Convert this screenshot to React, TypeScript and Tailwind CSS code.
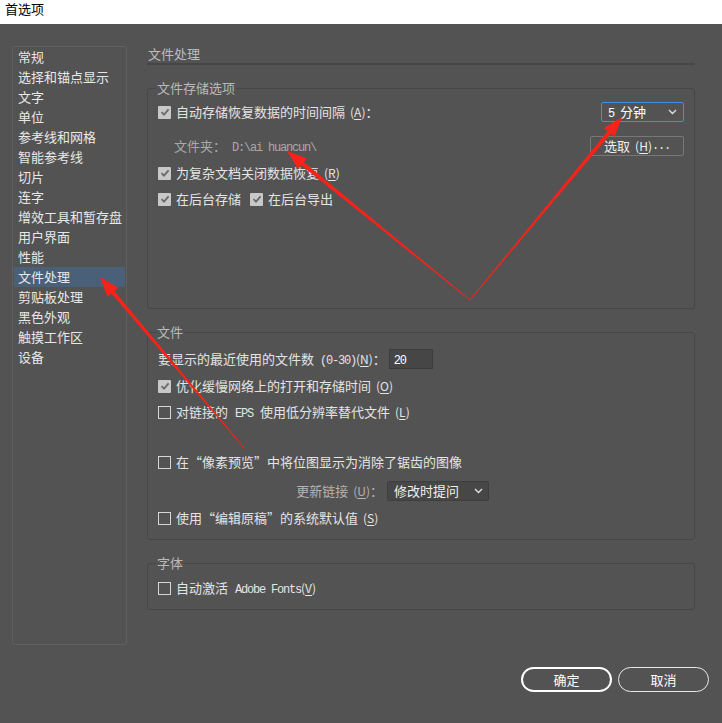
import type { FC, ReactNode } from "react";

const navItems = [
  "常规",
  "选择和锚点显示",
  "文字",
  "单位",
  "参考线和网格",
  "智能参考线",
  "切片",
  "连字",
  "增效工具和暂存盘",
  "用户界面",
  "性能",
  "文件处理",
  "剪贴板处理",
  "黑色外观",
  "触摸工作区",
  "设备",
];

// half-width latin runs, like the SimSun look in the dialog
const L: FC<{ children: ReactNode; className?: string }> = ({ children, className = "" }) => (
  <span className={`font-['Liberation_Mono'] text-[12px] tracking-[-1.2px] ${className}`}>{children}</span>
);

const Key: FC<{ k: string }> = ({ k }) => (
  <span className="ml-[5px] text-[12px]">
    (<u className="underline-offset-2">{k}</u>)
  </span>
);

const Checkbox: FC<{ checked?: boolean; label: ReactNode }> = ({ checked, label }) => (
  <label className="flex items-center gap-[5px] h-[20px] text-[#e4e4e4]">
    {checked ? (
      <span className="w-[13px] h-[13px] rounded-[1px] bg-[#c8c8c8] flex items-center justify-center">
        <svg width="10" height="10" viewBox="0 0 10 10">
          <path d="M1.5 5.2 L4 7.6 L8.6 2.4" stroke="#6a6a6a" strokeWidth="1.8" fill="none" />
        </svg>
      </span>
    ) : (
      <span className="w-[13px] h-[13px] border border-[#d6d6d6]" />
    )}
    <span>{label}</span>
  </label>
);

const Chevron = () => (
  <svg width="9" height="6" viewBox="0 0 9 6">
    <path d="M1 1 L4.5 4.5 L8 1" stroke="#e0e0e0" strokeWidth="1.4" fill="none" />
  </svg>
);

const Group: FC<{ title: string; className: string; children: ReactNode }> = ({
  title,
  className,
  children,
}) => (
  <fieldset className={`border border-[#474747] rounded-[3px] pl-[10px] pr-[10px] ${className}`}>
    <legend className="-ml-[2px] px-px leading-[18px] text-[#b9b9b9]">{title}</legend>
    {children}
  </fieldset>
);

const arrow = (tx: number, ty: number, px: number, py: number) => {
  const dx = px - tx;
  const dy = py - ty;
  const len = Math.hypot(dx, dy);
  const ux = dx / len;
  const uy = dy / len;
  const nx = -uy;
  const ny = ux;
  const head = 20;
  const bx = px - ux * head;
  const by = py - uy * head;
  const pts: [number, number][] = [
    [tx + nx * 0.4, ty + ny * 0.4],
    [bx + nx * 2, by + ny * 2],
    [bx + nx * 7, by + ny * 7],
    [px, py],
    [bx - nx * 7, by - ny * 7],
    [bx - nx * 2, by - ny * 2],
    [tx - nx * 0.4, ty - ny * 0.4],
  ];
  return pts.map((p) => p.map((v) => v.toFixed(1)).join(",")).join(" ");
};

const App: FC = () => {
  return (
    <div className="relative w-[722px] h-[723px] bg-[#535353] text-[13px] font-['Noto_Sans_CJK_SC',sans-serif] overflow-hidden">
      <div className="h-[24px] bg-white pl-[5px] text-black leading-[17px]">首选项</div>

      <div className="flex pt-[22px] pl-[12px] gap-[20px]">
        <nav className="w-[115px] h-[599px] border border-[#606060] rounded-[2px]">
          {navItems.map((item) => (
            <div
              key={item}
              className={`h-[20px] leading-[20px] mx-px pl-[4px] text-[#e8e8e8] ${
                item === "文件处理" ? "bg-[#4a6078]" : ""
              }`}
            >
              {item}
            </div>
          ))}
        </nav>

        <div className="w-[548px] -mt-[1px]">
          <div className="h-[20px] leading-[18px] pl-px text-[#bdbdbd] border-b-2 border-[#464646]">文件处理</div>

          <Group title="文件存储选项" className="mt-[14px] h-[230px]">
            <div className="flex items-center justify-between h-[20px] mt-[5px]">
              <Checkbox
                checked
                label={
                  <>
                    自动存储恢复数据的时间间隔<Key k="A" />：
                  </>
                }
              />
              <div className="w-[83px] h-[20px] border border-[#3f8fe6] rounded-[2px] flex items-center justify-between pl-[6px] pr-[6px] text-white">
                <span>
                  <L className="mr-[6px]">5</L>分钟
                </span>
                <Chevron />
              </div>
            </div>
            <div className="flex items-center justify-between h-[20px] mt-[14px]">
              <span className="pl-[16px] text-[#a9a9a9]">
                文件夹：<L className="ml-[6px]">D:\ai huancun\</L>
              </span>
              <div className="w-[94px] h-[20px] border border-[#777777] rounded-[2px] flex items-center justify-center text-[#eeeeee]">
                选取<Key k="H" />
                <L>...</L>
              </div>
            </div>
            <div className="mt-[7px]">
              <Checkbox
                checked
                label={
                  <>
                    为复杂文档关闭数据恢复<Key k="R" />
                  </>
                }
              />
            </div>
            <div className="mt-[6px] flex gap-[9px]">
              <Checkbox checked label="在后台存储" />
              <Checkbox checked label="在后台导出" />
            </div>
          </Group>

          <Group title="文件" className="mt-[14px] h-[217px]">
            <div className="flex items-center h-[20px] mt-[8px] text-[#e4e4e4]">
              <span>
                要显示的最近使用的文件数<L className="ml-[6px]">(0-30)</L>
                <span className="text-[12px]">
                  (<u className="underline-offset-2">N</u>)
                </span>
                ：
              </span>
              <div className="ml-[3px] w-[44px] h-[20px] bg-[#464646] border border-[#3c3c3c] pl-[4px] leading-[18px] text-white">
                <L>20</L>
              </div>
            </div>
            <div className="mt-[7px]">
              <Checkbox
                checked
                label={
                  <>
                    优化缓慢网络上的打开和存储时间<Key k="O" />
                  </>
                }
              />
            </div>
            <div className="mt-[6px]">
              <Checkbox
                label={
                  <>
                    对链接的<L className="mx-[7px]">EPS</L>使用低分辨率替代文件<Key k="L" />
                  </>
                }
              />
            </div>
            <div className="mt-[30px]">
              <Checkbox label="在“像素预览”中将位图显示为消除了锯齿的图像" />
            </div>
            <div className="flex items-center h-[20px] mt-[9px]">
              <span className="w-[225px] text-right text-[#b4b4b4]">
                更新链接<Key k="U" />：
              </span>
              <div className="ml-[4px] w-[102px] h-[20px] bg-[#474747] border border-[#3e3e3e] rounded-[2px] flex items-center justify-between pl-[6px] pr-[5px] text-[#f0f0f0]">
                <span>修改时提问</span>
                <Chevron />
              </div>
            </div>
            <div className="mt-[7px]">
              <Checkbox
                label={
                  <>
                    使用“编辑原稿”的系统默认值<Key k="S" />
                  </>
                }
              />
            </div>
          </Group>

          <Group title="字体" className="mt-[14px] h-[56px]">
            <div className="mt-[6px]">
              <Checkbox
                label={
                  <>
                    自动激活<L className="ml-[7px]">Adobe Fonts</L>
                    <span className="text-[12px]">
                      (<u className="underline-offset-2">V</u>)
                    </span>
                  </>
                }
              />
            </div>
          </Group>
        </div>
      </div>

      <div className="flex justify-end gap-[6px] pr-[13px] mt-[22px]">
        <button className="w-[91px] h-[25px] rounded-full border-2 border-white text-white">确定</button>
        <button className="w-[91px] h-[25px] rounded-full border-[1.5px] border-[#e8e8e8] text-white">取消</button>
      </div>

      <svg className="absolute inset-0 pointer-events-none" width="722" height="723">
        <polygon points={arrow(470, 300, 287, 151)} fill="#f5231a" />
        <polygon points={arrow(470, 300, 622, 117)} fill="#f5231a" />
        <polygon points={arrow(245, 449, 100, 277)} fill="#f5231a" />
      </svg>
    </div>
  );
};

export default App;
